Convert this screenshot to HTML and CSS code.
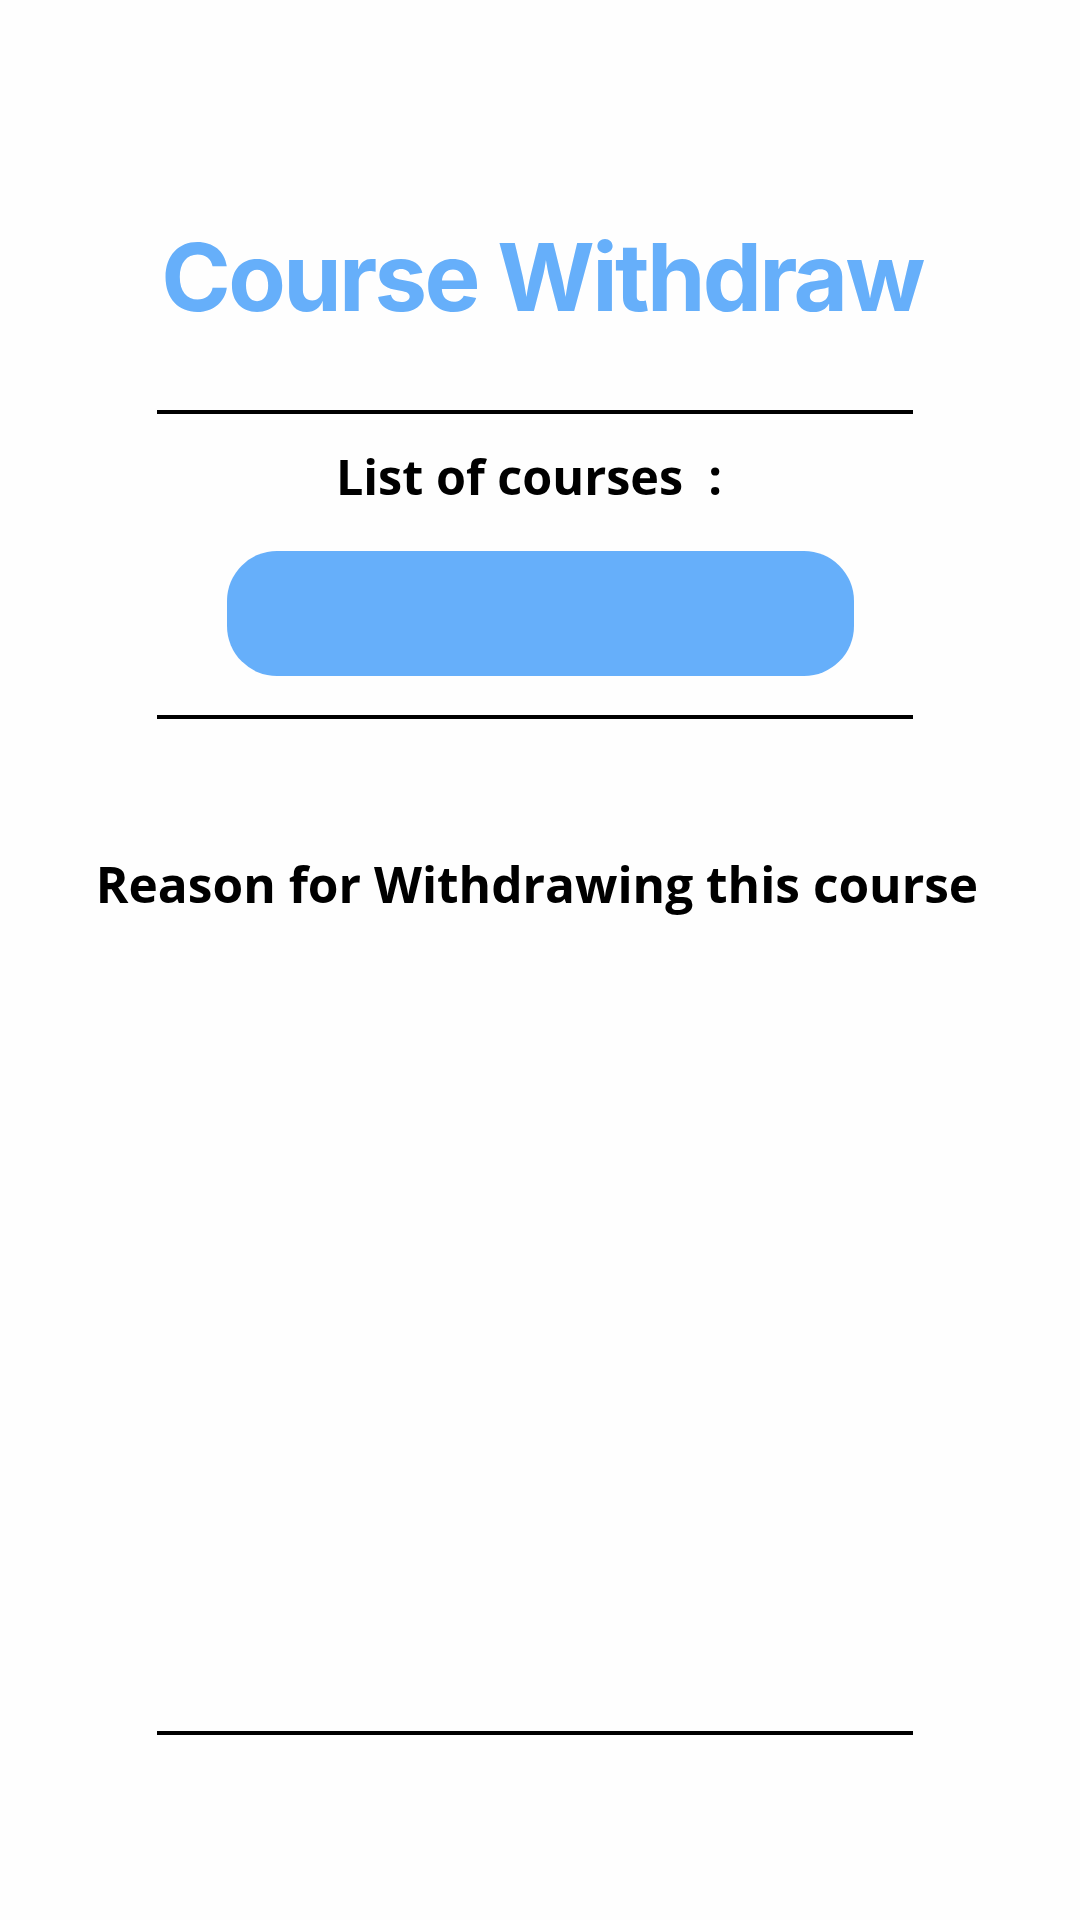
FILE: index.html
```html
<!DOCTYPE html>
<html lang="en">
<head>
<meta charset="utf-8">
<title>Course Withdraw</title>
<link rel="stylesheet" href="styles.css">
</head>
<body>
<main class="page">
  <h1 class="title">Course Withdraw</h1>
  <hr class="rule rule-one">
  <p class="label">List of courses &nbsp;:</p>
  <div class="select"></div>
  <hr class="rule rule-two">
  <p class="reason">Reason for Withdrawing this course</p>
  <hr class="rule rule-three">
</main>
</body>
</html>
```

FILE: styles.css
```css
html, body {
  margin: 0;
  padding: 0;
  background: #fefefe;
}

.page {
  width: 1080px;
  min-height: 1920px;
  display: flex;
  flex-direction: column;
  align-items: center;
  padding-top: 230px;
  box-sizing: border-box;
}

.title {
  margin: 0 0 0 4px;
  font-family: Inter, "Liberation Sans", sans-serif;
  font-weight: 700;
  font-size: 94px;
  line-height: 94px;
  color: #66affa;
  letter-spacing: -2.7px;
}

.rule {
  width: 756px;
  height: 4px;
  margin: 0 10px 0 0;
  border: 0;
  background: #000;
}

.rule-one { margin-top: 86px; }
.rule-two { margin-top: 39px; }
.rule-three { margin-top: 817px; }

.label {
  margin: 32px 22px 0 0;
  font-family: "Open Sans", sans-serif;
  font-weight: 700;
  font-size: 48.5px;
  line-height: 60px;
  color: #000;
  white-space: pre;
}

.select {
  margin-top: 45px;
  width: 627px;
  height: 125px;
  border-radius: 50px;
  background: #66affa;
}

.reason {
  margin: 135px 6px 0 0;
  font-family: "Open Sans", sans-serif;
  font-weight: 700;
  font-size: 49.6px;
  line-height: 60px;
  color: #000;
}
```
